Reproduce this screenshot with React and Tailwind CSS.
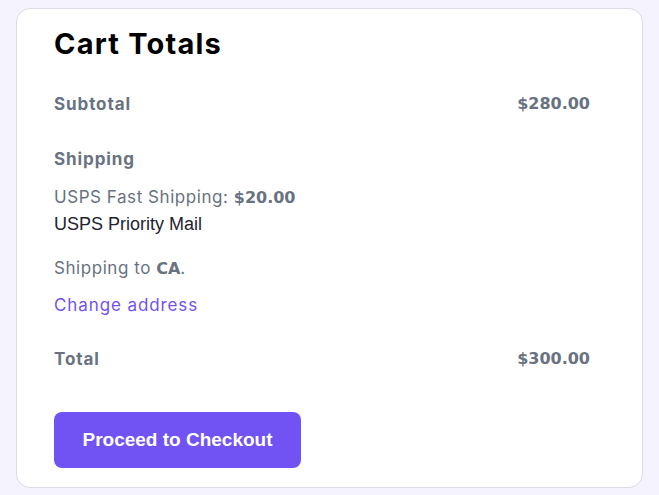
export default function App() {
  return (
    <div className="min-h-screen bg-[#f5f4fe] px-4 pt-2 font-['Inter',sans-serif]">
      <div className="h-[480px] rounded-[14px] border border-[#dcdbe6] bg-white pl-[37px] pr-[52px] pt-[18px]">
        <h2 className="text-[29px] font-bold leading-[34px] tracking-[1.2px] text-black">Cart Totals</h2>

        <div className="mt-[31px] flex items-center justify-between text-[16px] leading-[24px] text-[#687280]">
          <span className="text-[17px] font-bold tracking-[0.9px]">Subtotal</span>
          <span className="font-['DejaVu_Sans',sans-serif] font-bold">$280.00</span>
        </div>

        <div className="mt-[31px] text-[17px] font-bold leading-[24px] tracking-[0.9px] text-[#687280]">Shipping</div>

        <div className="mt-[14px] text-[17px] leading-[24px] tracking-[0.55px] text-[#687280]">
          USPS Fast Shipping: <span className="font-['DejaVu_Sans',sans-serif] text-[16px] font-bold tracking-normal">$20.00</span>
        </div>
        <div className="mt-[2px] font-['Liberation_Sans',Arial,sans-serif] text-[18px] leading-[24px] text-[#1e2330]">USPS Priority Mail</div>

        <div className="mt-[20px] text-[17px] leading-[24px] tracking-[0.55px] text-[#687280]">
          Shipping to <span className="font-['DejaVu_Sans',sans-serif] text-[16px] font-bold tracking-normal">CA</span>.
        </div>
        <div className="mt-[12px] text-[17px] leading-[24px] tracking-[0.9px] text-[#7152f3]">Change address</div>

        <div className="mt-[30px] flex items-center justify-between text-[16px] leading-[24px] text-[#687280]">
          <span className="text-[17px] font-bold tracking-[0.9px]">Total</span>
          <span className="font-['DejaVu_Sans',sans-serif] font-bold">$300.00</span>
        </div>

        <button className="mt-[41px] flex h-[56px] w-[247px] items-center justify-center rounded-[8px] bg-[#7152f3] font-['Liberation_Sans',Arial,sans-serif] text-[19px] font-bold text-white">
          Proceed to Checkout
        </button>
      </div>
    </div>
  );
}
